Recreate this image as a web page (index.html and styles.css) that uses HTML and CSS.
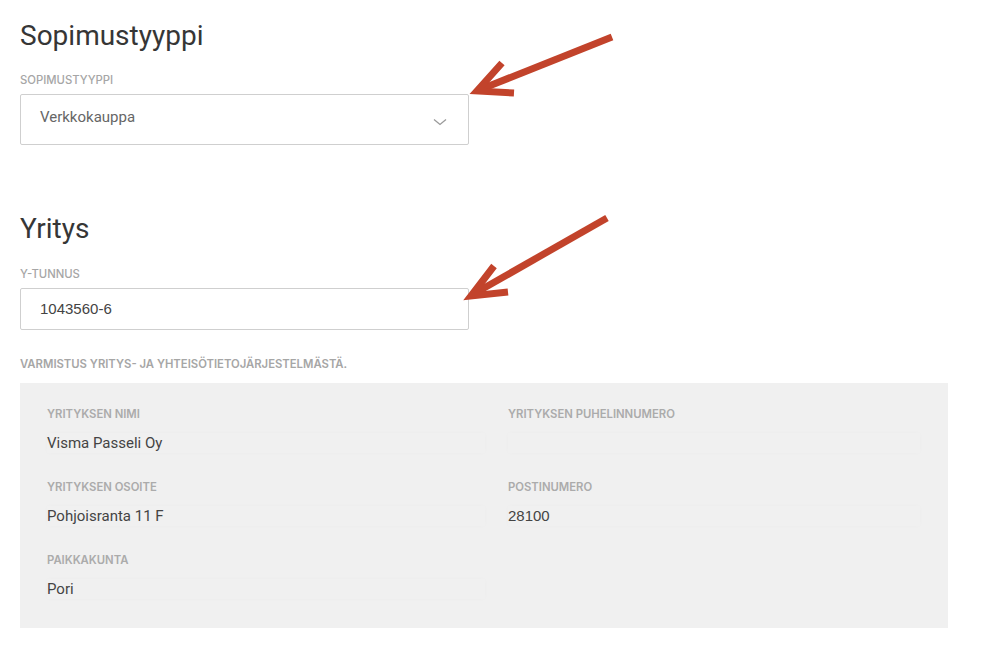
FILE: index.html
```html
<!DOCTYPE html>
<html lang="fi">
<head>
<meta charset="utf-8">
<title>Sopimustyyppi</title>
<link rel="stylesheet" href="styles.css">
</head>
<body>
<main class="page">
  <section class="section">
    <h1 class="title">Sopimustyyppi</h1>
    <div class="label">SOPIMUSTYYPPI</div>
    <div class="select">
      <span class="select-value">Verkkokauppa</span>
      <svg class="chevron" width="14" height="8" viewBox="0 0 14 8"><polyline points="1,1.5 7,6.5 13,1.5" fill="none" stroke="#9a9a9a" stroke-width="1.3"/></svg>
    </div>
  </section>
  <section class="section section-2">
    <h2 class="title">Yritys</h2>
    <div class="label">Y-TUNNUS</div>
    <div class="input">1043560-6</div>
    <div class="label label-verify">VARMISTUS YRITYS- JA YHTEISÖTIETOJÄRJESTELMÄSTÄ.</div>
    <div class="panel">
      <div class="col">
        <div class="field">
          <div class="label">YRITYKSEN NIMI</div>
          <div class="value">Visma Passeli Oy</div>
        </div>
        <div class="field">
          <div class="label">YRITYKSEN OSOITE</div>
          <div class="value">Pohjoisranta 11 F</div>
        </div>
        <div class="field">
          <div class="label">PAIKKAKUNTA</div>
          <div class="value">Pori</div>
        </div>
      </div>
      <div class="col">
        <div class="field">
          <div class="label">YRITYKSEN PUHELINNUMERO</div>
          <div class="value"></div>
        </div>
        <div class="field">
          <div class="label">POSTINUMERO</div>
          <div class="value num">28100</div>
        </div>
      </div>
    </div>
  </section>
</main>
<svg class="arrows" width="999" height="647" viewBox="0 0 999 647">
  <g fill="none" stroke="#c2432b" stroke-width="7">
    <line x1="612" y1="37" x2="484" y2="88"/>
    <polyline points="502,63 477,91 514,93" stroke-linejoin="miter" stroke-miterlimit="10"/>
    <line x1="607" y1="218" x2="477" y2="292"/>
    <polyline points="494,266 471,296 508,292" stroke-linejoin="miter" stroke-miterlimit="10"/>
  </g>
</svg>
</body>
</html>
```
FILE: styles.css
```css
html, body {
  margin: 0;
  padding: 0;
  background: #ffffff;
}
body {
  font-family: Roboto, "Noto Sans", "Liberation Sans", sans-serif;
  color: #3a3a3a;
  width: 999px;
  height: 647px;
  overflow: hidden;
  position: relative;
}
.page {
  padding: 0 0 0 20px;
  display: flex;
  flex-direction: column;
}
.section {
  display: flex;
  flex-direction: column;
}
.title {
  margin: 19px 0 0 0;
  font-size: 28px;
  line-height: 34px;
  font-weight: 400;
  color: #363636;
  letter-spacing: 0;
}
.section-2 .title {
  margin-top: 67px;
}
.label {
  margin-top: 20px;
  font-family: Inter, "Noto Sans", sans-serif;
  font-size: 11.3px;
  line-height: 14px;
  font-weight: 500;
  color: #a6a6a6;
  letter-spacing: 0;
}
.section-2 .label {
  margin-top: 21px;
}
.select {
  margin-top: 7px;
  width: 449px;
  height: 51px;
  box-sizing: border-box;
  border: 1px solid #cfcfcf;
  border-radius: 2px;
  padding: 12px 21px 0 19px;
  display: flex;
  justify-content: space-between;
  align-items: flex-start;
}
.select-value {
  font-size: 15px;
  line-height: 20px;
  color: #666666;
}
.chevron {
  margin-top: 11px;
}
.input {
  margin-top: 7px;
  width: 449px;
  height: 42px;
  box-sizing: border-box;
  border: 1px solid #cfcfcf;
  border-radius: 2px;
  padding: 10px 19px;
  font-family: "Liberation Sans", Arial, sans-serif;
  font-size: 15px;
  line-height: 20px;
  color: #444444;
}
.section-2 .label-verify {
  margin-top: 27px;
  font-weight: 600;
}
.panel {
  margin-top: 12px;
  width: 928px;
  height: 245px;
  box-sizing: border-box;
  background: #f0f0f0;
  padding: 24px 28px 0 27px;
  display: grid;
  grid-template-columns: 438px 412px;
  column-gap: 23px;
  align-items: start;
}
.col {
  display: flex;
  flex-direction: column;
  gap: 27px;
}
.field {
  display: flex;
  flex-direction: column;
}
.panel .label,
.section-2 .panel .label {
  margin-top: 0;
  font-weight: 600;
  color: #ababab;
}
.value {
  margin-top: 12px;
  height: 20px;
  font-size: 15px;
  line-height: 20px;
  color: #444444;
  background: #f0f0f0;
  box-shadow: 0 0 4px rgba(0, 0, 0, 0.02);
}
.num {
  font-family: "Liberation Sans", Arial, sans-serif;
}
.arrows {
  position: absolute;
  left: 0;
  top: 0;
  pointer-events: none;
}
```
